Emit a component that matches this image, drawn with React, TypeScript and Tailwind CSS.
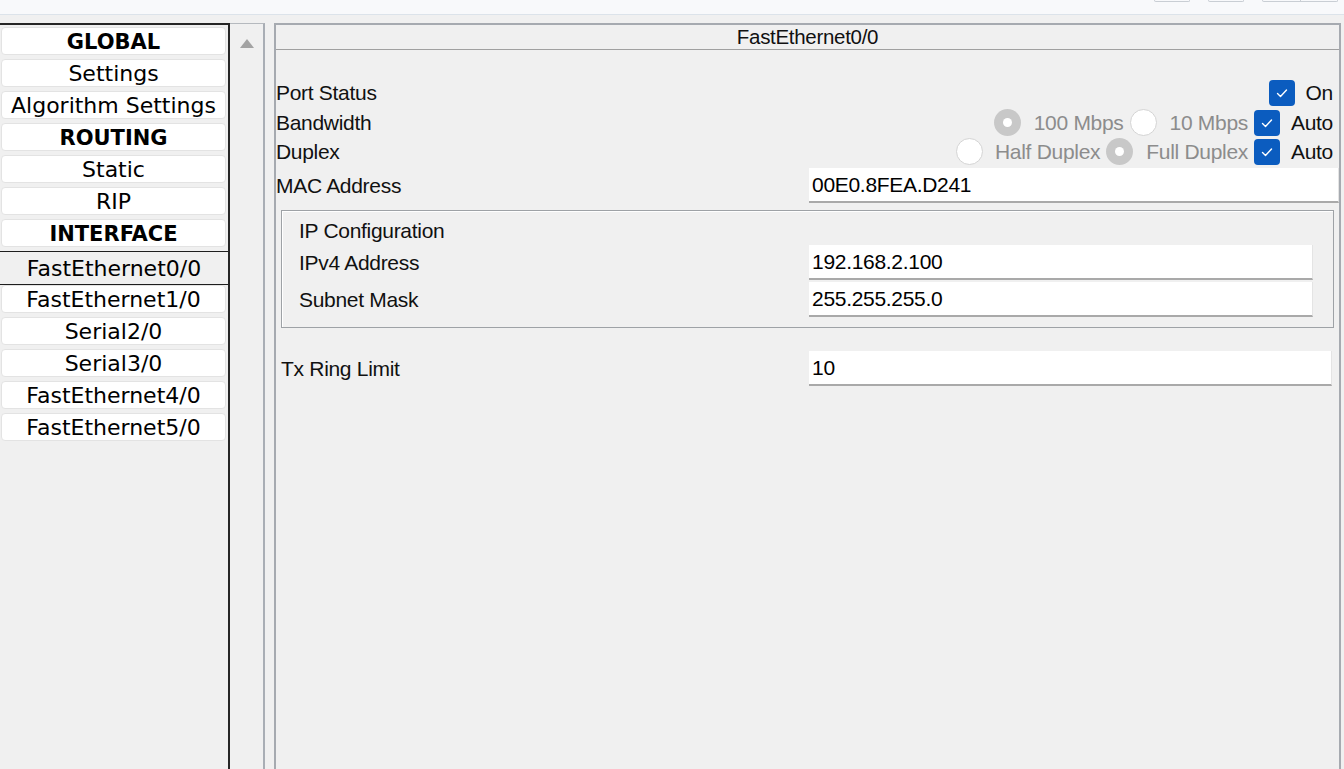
import React from "react";

const navItems = [
  { label: "GLOBAL", bold: true },
  { label: "Settings" },
  { label: "Algorithm Settings" },
  { label: "ROUTING", bold: true },
  { label: "Static" },
  { label: "RIP" },
  { label: "INTERFACE", bold: true },
  { label: "FastEthernet0/0", selected: true },
  { label: "FastEthernet1/0" },
  { label: "Serial2/0" },
  { label: "Serial3/0" },
  { label: "FastEthernet4/0" },
  { label: "FastEthernet5/0" },
];

function CheckBox() {
  return (
    <div className="w-[26px] h-[26px] rounded-[4px] bg-[#0b5cbf] flex items-center justify-center shrink-0">
      <svg width="26" height="26" viewBox="0 0 26 26">
        <polyline
          points="8.5,13.5 11.5,16.5 17.5,10"
          fill="none"
          stroke="#ffffff"
          strokeWidth="1.4"
          strokeLinecap="round"
          strokeLinejoin="round"
        />
      </svg>
    </div>
  );
}

function Radio({ checked }: { checked?: boolean }) {
  if (checked) {
    return (
      <div className="w-[27px] h-[27px] rounded-full bg-[#c8c8c8] flex items-center justify-center shrink-0">
        <div className="w-[9px] h-[9px] rounded-full bg-white" />
      </div>
    );
  }
  return <div className="w-[27px] h-[27px] rounded-full bg-white border border-[#d4d4d4] shrink-0" />;
}

function Field({ value, className }: { value: string; className?: string }) {
  return (
    <div
      className={`h-[35px] bg-white border-b-2 border-r border-b-[#a9a9a9] border-r-[#e4e4e4] flex items-center pl-[3px] text-black ${className ?? ""}`}>
      {value}
    </div>
  );
}

export default function App() {
  return (
    <div className="w-[1344px] h-[769px] overflow-hidden bg-[#f0f0f0]">
      {/* top bar */}
      <div className="h-[15px] bg-[#f8f9fb] border-b border-[#dce3ea] flex items-start justify-end pr-[6px]">
        <div className="w-[36px] h-[2px] border-x border-b border-[#c9ced4] rounded-b-[3px] mr-[18px]" />
        <div className="w-[36px] h-[2px] border-x border-b border-[#c9ced4] rounded-b-[3px] mr-[18px]" />
        <div className="w-[76px] h-[2px] border-x border-b border-[#c9ced4] rounded-b-[3px] flex">
          <div className="w-[38px] border-r border-[#c9ced4]" />
        </div>
      </div>

      <div className="flex pt-[8px]">
        {/* left nav */}
        <div className="w-[230px] h-[800px] border-t-2 border-r-2 border-[#262626] pt-[2px] flex flex-col font-['DejaVu_Sans',sans-serif] text-[22px] text-black">
          {navItems.map((item) =>
            item.selected ? (
              <div
                key={item.label}
                className="h-[34px] bg-[#f0f0f0] border-y border-[#1e1e1e] flex items-center justify-center pt-[1px]">
                {item.label}
              </div>
            ) : (
              <div key={item.label} className="h-[32px] pb-[4px]">
                <div
                  className={`ml-[1px] w-[225px] h-[28px] bg-white rounded-[4px] border border-[#e3e3e3] flex items-center justify-center ${
                    item.bold ? "font-bold text-[21px] pt-[4px]" : "pt-[1px]"
                  }`}>
                  {item.label}
                </div>
              </div>
            )
          )}
        </div>

        {/* scroll column */}
        <div className="w-[35px] h-[800px] border-t border-r-2 border-t-[#b5b9be] border-r-[#a9aeb5] flex justify-center pt-[15px]">
          <svg width="14" height="9" viewBox="0 0 14 9">
            <polygon points="7,0 14,9 0,9" fill="#a3a3a3" />
          </svg>
        </div>

        <div className="w-[9px]" />

        {/* right panel */}
        <div className="w-[1067px] h-[800px] border-2 border-[#a6aab0] font-['Liberation_Sans',Arial,sans-serif] text-[21px] tracking-[-0.3px] text-[#111111]">
          <div className="h-[25px] border-b border-[#a0a0a0] flex items-center justify-center text-[20.5px]">
            FastEthernet0/0
          </div>

          <div className="pt-[28px]">
            <div className="h-[30px] flex items-center justify-between pr-[6px]">
              <span>Port Status</span>
              <div className="flex items-center">
                <CheckBox />
                <span className="ml-[11px]">On</span>
              </div>
            </div>

            <div className="h-[29px] flex items-center justify-between pr-[6px]">
              <span>Bandwidth</span>
              <div className="flex items-center text-[#8c8c8c]">
                <Radio checked />
                <span className="ml-[13px] mr-[6px]">100 Mbps</span>
                <Radio />
                <span className="ml-[13px] mr-[6px]">10 Mbps</span>
                <CheckBox />
                <span className="ml-[11px] text-[#111111]">Auto</span>
              </div>
            </div>

            <div className="h-[29px] flex items-center justify-between pr-[6px]">
              <span>Duplex</span>
              <div className="flex items-center text-[#8c8c8c]">
                <Radio />
                <span className="ml-[12px] mr-[6px]">Half Duplex</span>
                <Radio checked />
                <span className="ml-[13px] mr-[6px]">Full Duplex</span>
                <CheckBox />
                <span className="ml-[11px] text-[#111111]">Auto</span>
              </div>
            </div>

            <div className="mt-[2px] flex items-center">
              <span className="w-[533px]">MAC Address</span>
              <Field value="00E0.8FEA.D241" className="flex-1 h-[34px]" />
            </div>

            {/* IP configuration group */}
            <div className="mt-[7px] mx-[5px] border border-[#9ea2a6] shadow-[inset_1px_1px_0_#ffffff] pt-[6px] pb-[10px]">
              <div className="h-[28px] flex items-center pl-[17px]">IP Configuration</div>
              <div className="flex items-center">
                <span className="w-[527px] pl-[17px]">IPv4 Address</span>
                <Field value="192.168.2.100" className="flex-1 mr-[20px]" />
              </div>
              <div className="flex items-center mt-[2px]">
                <span className="w-[527px] pl-[17px]">Subnet Mask</span>
                <Field value="255.255.255.0" className="flex-1 mr-[20px]" />
              </div>
            </div>

            <div className="mt-[23px] flex items-center pl-[5px]">
              <span className="w-[528px]">Tx Ring Limit</span>
              <Field value="10" className="flex-1 mr-[7px]" />
            </div>
          </div>
        </div>
      </div>
    </div>
  );
}
